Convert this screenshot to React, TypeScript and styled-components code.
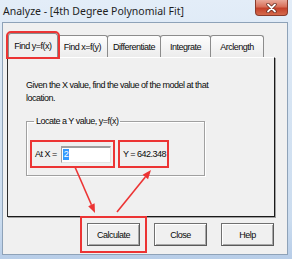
import styled, { createGlobalStyle } from 'styled-components';

const GlobalStyle = createGlobalStyle`
  html, body {
    margin: 0;
    padding: 0;
  }
  body {
    width: 292px;
    height: 259px;
    overflow: hidden;
    background: #c3d8ee;
  }
`;

const UI_FONT = `'Liberation Sans', Arial, sans-serif`;

const Screen = styled.div`
  position: relative;
  width: 292px;
  height: 259px;
  overflow: hidden;
  box-sizing: border-box;
  padding: 0 4px 4px 2px;
  display: flex;
  flex-direction: column;
  background: linear-gradient(180deg, #e3edf8 0%, #d6e4f3 40%, #cbdcef 85%, #b7cde8 100%);
`;

const TitleBar = styled.div`
  height: 22px;
  display: flex;
  align-items: flex-start;
  justify-content: space-between;
  flex-shrink: 0;
`;

const Title = styled.div`
  margin: 4px 0 0 1px;
  font-family: 'Noto Sans', 'Liberation Sans', sans-serif;
  font-size: 10.5px;
  line-height: 14px;
  color: #1e1e1e;
`;

const CloseBox = styled.div`
  width: 33px;
  height: 16px;
  box-sizing: border-box;
  border: 1px solid #8a3b2b;
  border-top: none;
  border-radius: 0 0 4px 4px;
  background: linear-gradient(180deg, #e9a899 0%, #d8705a 45%, #c4412a 55%, #d56a4c 100%);
  display: flex;
  align-items: center;
  justify-content: center;
`;

const Body = styled.div`
  flex: 1;
  display: flex;
  flex-direction: column;
  box-sizing: border-box;
  border: 1px solid #8ea2b8;
  background: #f0f0f0;
  font-family: ${UI_FONT};
  font-size: 9px;
  letter-spacing: -0.5px;
  color: #0a0a0a;
`;

const TabStrip = styled.div`
  display: flex;
  align-items: flex-end;
  height: 34px;
  padding-left: 5px;
`;

const Tab = styled.div<{ $active?: boolean; $w: number }>`
  box-sizing: border-box;
  width: ${(p) => p.$w}px;
  height: ${(p) => (p.$active ? 24 : 22)}px;
  margin-left: ${(p) => (p.$active ? 0 : -1)}px;
  border: 1px solid #8c8c8c;
  border-bottom: none;
  border-radius: 3px 3px 0 0;
  background: ${(p) => (p.$active ? '#f0f0f0' : 'linear-gradient(180deg, #fdfdfd, #ececec)')};
  display: flex;
  align-items: center;
  justify-content: center;
  white-space: nowrap;
  position: relative;
  z-index: ${(p) => (p.$active ? 2 : 1)};
  outline: ${(p) => (p.$active ? '2px solid #ec3434' : 'none')};
  outline-offset: 0px;
`;

const Panel = styled.div`
  box-sizing: border-box;
  width: 268px;
  height: 160px;
  margin-left: 4px;
  border-top: 1px solid #ffffff;
  border-left: 1px solid #2c2c2c;
  border-right: 1px solid #1a1a1a;
  border-bottom: 1px solid #1a1a1a;
  box-shadow: 1px 1px 0 #a0a0a0;
  padding: 21px 0 0 18px;
`;

const Intro = styled.p`
  margin: 0;
  line-height: 13px;
  width: 200px;
`;

const GroupBox = styled.fieldset`
  box-sizing: border-box;
  width: 179px;
  height: 60px;
  margin: 11px 0 0 0;
  padding: 14px 0 0 3px;
  border: 1px solid #a0a0a0;
  box-shadow: inset 1px 1px 0 #ffffff, 1px 1px 0 #ffffff;
  display: flex;
  gap: 3px;
  align-items: flex-start;
`;

const Legend = styled.legend`
  padding: 0 2px;
  margin-left: 4px;
`;

const Marked = styled.div<{ $w: number }>`
  box-sizing: border-box;
  width: ${(p) => p.$w}px;
  height: 28px;
  border: 2px solid #ec3434;
  display: flex;
  align-items: center;
  padding: 0 2px 0 3px;
  gap: 4px;
`;

const Label = styled.span`
  white-space: nowrap;
`;

const TextInput = styled.div`
  box-sizing: border-box;
  width: 52px;
  height: 17px;
  background: #ffffff;
  border-top: 2px solid #a0a0a0;
  border-left: 1px solid #a0a0a0;
  border-right: 1px solid #e3e3e3;
  border-bottom: 1px solid #e3e3e3;
  display: flex;
  align-items: center;
  padding-left: 1px;
`;

const Selection = styled.span`
  background: #3399ff;
  color: #ffffff;
  line-height: 11px;
  padding: 0 1px;
`;

const ButtonRow = styled.div`
  display: flex;
  justify-content: flex-end;
  gap: 14px;
  padding: 6px 13px 0 0;
`;

const Button = styled.div<{ $marked?: boolean }>`
  box-sizing: border-box;
  width: 53px;
  height: 23px;
  border: 1px solid #707070;
  border-right-color: #5a5a5a;
  border-bottom-color: #5a5a5a;
  box-shadow: inset 1px 1px 0 #ffffff, inset -1px -1px 0 #a8a8a8;
  background: #f0f0f0;
  display: flex;
  align-items: center;
  justify-content: center;
  outline: ${(p) => (p.$marked ? '2px solid #ec3434' : 'none')};
  outline-offset: 5px;
`;

const Arrows = styled.svg`
  position: absolute;
  left: 0;
  top: 0;
  pointer-events: none;
`;

const Arrow = ({ x1, y1, x2, y2 }: { x1: number; y1: number; x2: number; y2: number }) => {
  const a = Math.atan2(y2 - y1, x2 - x1);
  const len = 9;
  const half = 3.5;
  const bx = x2 - len * Math.cos(a);
  const by = y2 - len * Math.sin(a);
  const px = -Math.sin(a) * half;
  const py = Math.cos(a) * half;
  return (
    <g>
      <line x1={x1} y1={y1} x2={bx} y2={by} stroke="#ec3434" strokeWidth={1.6} />
      <polygon points={`${x2},${y2} ${bx + px},${by + py} ${bx - px},${by - py}`} fill="#ec3434" />
    </g>
  );
};

const tabs = [
  { label: 'Find y=f(x)', w: 50, active: true },
  { label: 'Find x=f(y)', w: 51 },
  { label: 'Differentiate', w: 54 },
  { label: 'Integrate', w: 51 },
  { label: 'Arclength', w: 54 },
];

export default function App() {
  return (
    <>
      <GlobalStyle />
      <Screen>
        <TitleBar>
          <Title>Analyze - [4th Degree Polynomial Fit]</Title>
          <CloseBox>
            <svg width="11" height="10" viewBox="0 0 11 10">
              <path d="M2 1.5 L9 8.5 M9 1.5 L2 8.5" stroke="#5b2217" strokeWidth="3.2" strokeLinecap="round" />
              <path d="M2 1.5 L9 8.5 M9 1.5 L2 8.5" stroke="#ffffff" strokeWidth="1.8" strokeLinecap="round" />
            </svg>
          </CloseBox>
        </TitleBar>
        <Body>
          <TabStrip>
            {tabs.map((t) => (
              <Tab key={t.label} $active={t.active} $w={t.w}>
                {t.label}
              </Tab>
            ))}
          </TabStrip>
          <Panel>
            <Intro>Given the X value, find the value of the model at that location.</Intro>
            <GroupBox>
              <Legend>Locate a Y value, y=f(x)</Legend>
              <Marked $w={85}>
                <Label>At X =</Label>
                <TextInput>
                  <Selection>2</Selection>
                </TextInput>
              </Marked>
              <Marked $w={51}>
                <Label>Y = 642.348</Label>
              </Marked>
            </GroupBox>
          </Panel>
          <ButtonRow>
            <Button $marked>Calculate</Button>
            <Button>Close</Button>
            <Button>Help</Button>
          </ButtonRow>
        </Body>
        <Arrows width="292" height="259" viewBox="0 0 292 259">
          <Arrow x1={75} y1={167} x2={95} y2={213} />
          <Arrow x1={117} y1={212} x2={151} y2={170} />
        </Arrows>
      </Screen>
    </>
  );
}
